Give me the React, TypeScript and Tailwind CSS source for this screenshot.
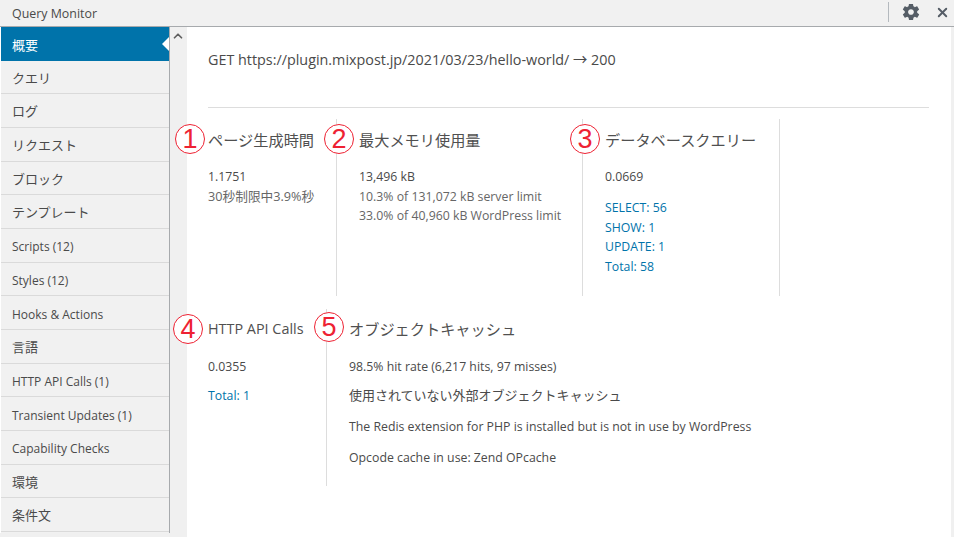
import { ChevronUp, X } from "lucide-react";
import { IoMdSettings } from "react-icons/io";

const FONT = "font-['Open_Sans','Noto_Sans_CJK_JP',sans-serif]";

const tabs = [
  { label: "概要", ja: true },
  { label: "クエリ", ja: true },
  { label: "ログ", ja: true },
  { label: "リクエスト", ja: true },
  { label: "ブロック", ja: true },
  { label: "テンプレート", ja: true },
  { label: "Scripts (12)" },
  { label: "Styles (12)" },
  { label: "Hooks & Actions" },
  { label: "言語", ja: true },
  { label: "HTTP API Calls (1)" },
  { label: "Transient Updates (1)" },
  { label: "Capability Checks" },
  { label: "環境", ja: true },
  { label: "条件文", ja: true },
];

function Marker({ n, className }: { n: number; className: string }) {
  return (
    <span
      className={`absolute flex h-[30px] w-[30px] items-center justify-center rounded-full border-[1.5px] border-[#ee2233] bg-white font-['Liberation_Sans',sans-serif] text-[27px] leading-none text-[#ee2233] ${className}`}
    >
      {n}
    </span>
  );
}

function Section({
  title,
  className,
  titleClass,
  children,
}: {
  title: string;
  className: string;
  titleClass: string;
  children: React.ReactNode;
}) {
  return (
    <section className={className}>
      <h3 className={`leading-[20px] text-[#505050] ${titleClass}`}>{title}</h3>
      {children}
    </section>
  );
}

export default function App() {
  return (
    <div className={`${FONT} flex h-[537px] w-[954px] flex-col overflow-hidden bg-white text-[12.3px] text-[#4a4a4a]`}>
      <header className="flex h-[27px] shrink-0 items-center border-b border-[#a7aaad] bg-[#f1f1f1] pl-[12px]">
        <span className="pt-[2px] text-[12.4px]">Query Monitor</span>
        <div className="mb-[2px] ml-auto flex items-center">
          <span className="h-[20px] w-px bg-[#b4b9be]" />
          <IoMdSettings size={20} className="ml-[12px] text-[#555d66]" />
          <X size={15} strokeWidth={3} className="ml-[14px] mr-[4px] text-[#555d66]" />
        </div>
      </header>
      <div className="flex min-h-0 flex-1 bg-[#f0f0f0]">
        <nav className="flex h-[506px] w-[170px] shrink-0 flex-col border-x border-l-white border-r-[#a7aaad] bg-[#f1f1f1]">
          {tabs.map((tab, i) => (
            <a
              key={tab.label}
              className={`${tab.ja ? "pt-[3px] text-[13px]" : "pt-[4px] text-[12px]"} ${
                i === 0
                  ? "relative flex h-[33.67px] shrink-0 items-center bg-[#0073aa] pl-[11px] text-white"
                  : "flex h-[33.67px] shrink-0 items-center border-b border-[#dadada] pl-[11px]"
              }`}
            >
              {tab.label}
              {i === 0 && (
                <span className="absolute right-0 top-[10px] h-0 w-0 border-y-[7px] border-r-[7px] border-y-transparent border-r-white" />
              )}
            </a>
          ))}
        </nav>
        <div className="flex w-[17px] shrink-0 justify-center pr-[2px] pt-[2px]">
          <ChevronUp size={14} strokeWidth={3} className="text-[#606060]" />
        </div>
        <main className="relative min-w-0 flex-1 bg-white pl-[21px] pr-[22px]">
          <p className="mt-[23px] text-[14.35px] leading-[20px]">GET https://plugin.mixpost.jp/2021/03/23/hello-world/ → 200</p>
          <hr className="mt-[37px] border-[#dddddd]" />
          <div className="mt-[11px] flex h-[177px]">
            <Section title="ページ生成時間" titleClass="mb-[17px] text-[15.2px]" className="w-[128px] pt-[11px]">
              <p className="leading-[20px]">1.1751</p>
              <p className="text-[12.7px] leading-[19px] text-[#666]">30秒制限中3.9%秒</p>
            </Section>
            <Section title="最大メモリ使用量" titleClass="mb-[17px] text-[15.2px]" className="w-[246px] border-l border-[#dddddd] pl-[22px] pt-[11px]">
              <p className="leading-[19.6px]">13,496 kB</p>
              <p className="leading-[19.6px] text-[#666]">10.3% of 131,072 kB server limit</p>
              <p className="leading-[19.6px] text-[#666]">33.0% of 40,960 kB WordPress limit</p>
            </Section>
            <Section title="データベースクエリー" titleClass="mb-[17px] text-[15.2px]" className="w-[198px] border-x border-[#dddddd] pl-[22px] pt-[11px]">
              <p className="mb-[11px] leading-[20px]">0.0669</p>
              {["SELECT: 56", "SHOW: 1", "UPDATE: 1", "Total: 58"].map((q) => (
                <p key={q} className="leading-[19.6px] text-[#0073aa]">{q}</p>
              ))}
            </Section>
          </div>
          <div className="mt-[13px] flex h-[177px]">
            <Section title="HTTP API Calls" titleClass="mb-[18px] text-[14.4px]" className="w-[118px] pt-[10px]">
              <p className="mb-[9px] leading-[20px]">0.0355</p>
              <p className="leading-[20px] text-[#0073aa]">Total: 1</p>
            </Section>
            <Section title="オブジェクトキャッシュ" titleClass="mb-[18px] text-[15.2px]" className="border-l border-[#dddddd] pl-[22px] pt-[10px]">
              <p className="leading-[20px]">98.5% hit rate (6,217 hits, 97 misses)</p>
              <p className="mt-[8px] text-[13px] leading-[20px]">使用されていない外部オブジェクトキャッシュ</p>
              <p className="mt-[12px] leading-[20px]">The Redis extension for PHP is installed but is not in use by WordPress</p>
              <p className="mt-[11px] leading-[20px]">Opcode cache in use: Zend OPcache</p>
            </Section>
          </div>
          <Marker n={1} className="left-[-12px] top-[97px]" />
          <Marker n={2} className="left-[137px] top-[97px]" />
          <Marker n={3} className="left-[383px] top-[97px]" />
          <Marker n={4} className="left-[-14px] top-[287px]" />
          <Marker n={5} className="left-[127px] top-[285px]" />
        </main>
        <div className="w-[3px] shrink-0" />
      </div>
    </div>
  );
}
